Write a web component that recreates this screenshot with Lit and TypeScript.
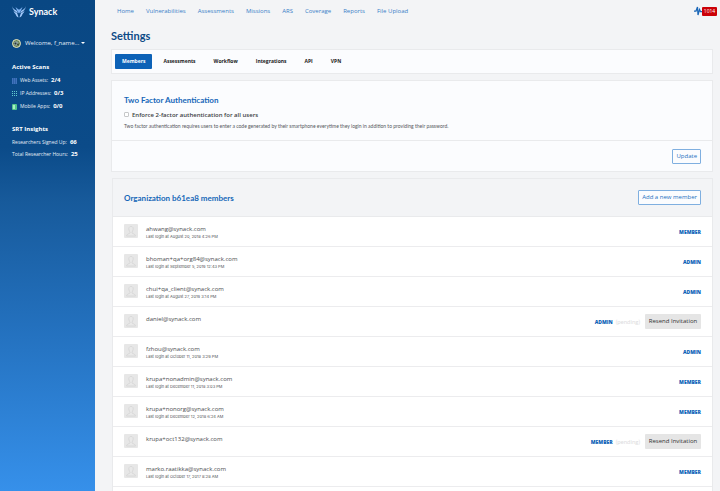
import { LitElement, html, css } from "lit";
import { customElement, property } from "lit/decorators.js";

interface Member {
  email: string;
  login?: string;
  role: string;
  pending?: boolean;
}

const NAV = ["Home", "Vulnerabilities", "Assessments", "Missions", "ARS", "Coverage", "Reports", "File Upload"];
const TABS = ["Members", "Assessments", "Workflow", "Integrations", "API", "VPN"];
const MEMBERS: Member[] = [
  { email: "ahwang@synack.com", login: "August 20, 2018 4:26 PM", role: "MEMBER" },
  { email: "bhoman+qa+org84@synack.com", login: "September 5, 2019 12:43 PM", role: "ADMIN" },
  { email: "chui+qa_client@synack.com", login: "August 27, 2019 3:14 PM", role: "ADMIN" },
  { email: "daniel@synack.com", role: "ADMIN", pending: true },
  { email: "fzhou@synack.com", login: "October 11, 2018 3:29 PM", role: "ADMIN" },
  { email: "krupa+nonadmin@synack.com", login: "December 11, 2018 3:03 PM", role: "MEMBER" },
  { email: "krupa+nonorg@synack.com", login: "December 12, 2018 6:24 AM", role: "MEMBER" },
  { email: "krupa+oct132@synack.com", role: "MEMBER", pending: true },
  { email: "marko.raatikka@synack.com", login: "October 17, 2017 8:28 AM", role: "MEMBER" },
];

@customElement("side-bar")
export class SideBar extends LitElement {
  static styles = css`
    :host {
      display: block;
      box-sizing: border-box;
      padding: 5px 0 0 12px;
      color: #e4edf6;
      background: linear-gradient(#094783 0%, #0b4b89 30%, #175a9b 41%, #2370bd 66%, #3690ea 100%);
      font-size: 5px;
      line-height: 13px;
    }
    .logo { display: flex; align-items: center; gap: 3px; height: 14px; color: #fff; font: 700 9px/14px Lato, sans-serif; text-decoration: none; }
    .user {
      display: flex; align-items: center; gap: 4px; margin: 17px 0 0; padding: 0; height: 14px;
      border: 0; background: none; color: #e4edf6; font: 6px/14px "Open Sans", sans-serif; white-space: nowrap;
    }
    .caret { width: 0; height: 0; border: 2px solid transparent; border-top-color: #fff; border-bottom: 0; margin-left: -2px; }
    h2 { margin: 10px 0 0; font-size: 6px; line-height: 13px; color: #fff; font-weight: 700; }
    .scans { margin-top: 11px; }
    ul { margin: 0; padding: 0; list-style: none; }
    li { display: flex; align-items: center; gap: 3px; height: 13px; white-space: nowrap; }
    b { color: #fff; font-size: 6px; }
    .stats { line-height: 12px; }
    .stats li { height: 12px; }
  `;
  render() {
    return html`
      <a class="logo" href="#">
        <svg width="14" height="12" viewBox="0 0 28 24" fill="#a3c9fb">
          <path d="M0 0c1 5 5 7 9 9l3 5C6 12 1 7 0 0zM3 9c2 3 5 4 7 5l2 5C7 17 4 14 3 9zM7 16c2 2 3 2 5 3l1 4c-3-1-5-3-6-7z" />
          <path d="M28 0c-1 5-5 7-9 9l-3 5c6-2 11-7 12-14zM25 9c-2 3-5 4-7 5l-2 5c5-2 8-5 9-10zM21 16c-2 2-3 2-5 3l-1 4c3-1 5-3 6-7z" />
          <path d="M7 2l6 5h2l6-5-4 9-3 4-3-4z" fill="#7fb2f3" />
        </svg>
        Synack
      </a>
      <button class="user">
        <svg width="9" height="9" viewBox="0 0 18 18">
          <circle cx="9" cy="9" r="8" fill="#6d8652" stroke="#e6e4c6" stroke-width="2" />
          <path d="M4 7q5-5 9 0v5q-4 3-9 0z" fill="#8fa3a0" />
          <circle cx="7" cy="9" r="2" fill="#26313a" /><circle cx="12" cy="11" r="2" fill="#3d4a2c" />
        </svg>
        Welcome, f_name... <span class="caret"></span>
      </button>
      <h2 class="scans">Active Scans</h2>
      <ul>
        <li>
          <svg width="5" height="6" viewBox="0 0 5 6"><path d="M0 0h5v6H0z" fill="#2c60a8" /><path d="M0 1h5M0 3h5M0 5h5" stroke="#5585cf" stroke-width="1" stroke-dasharray="1 1" /></svg>
          Web Assets: <b>2/4</b>
        </li>
        <li>
          <svg width="5" height="6" viewBox="0 0 5 6"><path d="M0 .5h5M0 2.500h5M0 4.500h5" stroke="#63cdd0" stroke-width="1" stroke-dasharray="1 1" /></svg>
          IP Addresses: <b>0/3</b>
        </li>
        <li>
          <svg width="5" height="6" viewBox="0 0 5 6"><rect width="5" height="6" rx="1" fill="#54c58d" /><path d="M1 1h2v4H1z" fill="#a9efc4" /></svg>
          Mobile Apps: <b>0/0</b>
        </li>
      </ul>
      <h2>SRT Insights</h2>
      <ul class="stats">
        <li>Researchers Signed Up: <b>66</b></li>
        <li>Total Researcher Hours: <b>25</b></li>
      </ul>
    `;
  }
}

@customElement("member-row")
export class MemberRow extends LitElement {
  @property({ attribute: false }) member!: Member;
  static styles = css`
    :host {
      display: flex; box-sizing: border-box; height: 30px; padding: 7px 11px 0;
      border-bottom: 1px solid #ececee; background: #fff;
    }
    .avatar { flex: none; width: 14px; height: 14px; margin-right: 8px; }
    .who { flex: 1; font-size: 6px; line-height: 10px; color: #4b4d50; }
    .login { font: 4px/5px Inter, sans-serif; color: #505255; }
    .side { display: flex; align-items: center; height: 15px; gap: 3px; font-size: 5px; }
    .role { color: #0d62b7; font-weight: 800; }
    .pending { color: #dcdcde; font: 6px/15px Lato, sans-serif; }
    button {
      height: 15px; margin: 0 0 0 2px; padding: 0; width: 56px; border: 0; border-radius: 1px;
      background: #e5e5e5; color: #333; font: 6px/15px "Open Sans", sans-serif; white-space: nowrap;
    }
  `;
  render() {
    const m = this.member;
    return html`
      <svg class="avatar" viewBox="0 0 28 28">
        <rect width="28" height="28" rx="2" fill="#e7e7e7" />
        <path d="M14 5c-4 0-5 3-4 7 .4 2 1.500 3 2 4v2c-1 2-6 1-7 6h18c-1-5-6-4-7-6v-2c.5-1 1.600-2 2-4 1-4 0-7-4-7z" fill="#e9e9e9" stroke="#d3d3d3" stroke-width="1.500" />
      </svg>
      <div class="who">
        <div>${m.email}</div>
        ${m.login ? html`<div class="login">Last login at ${m.login}</div>` : ""}
      </div>
      <div class="side">
        <span class="role">${m.role}</span>
        ${m.pending ? html`<span class="pending">(pending)</span><button>Resend Invitation</button>` : ""}
      </div>
    `;
  }
}

@customElement("app-root")
export class AppRoot extends LitElement {
  static styles = css`
    :host {
      display: grid; grid-template-columns: 95px minmax(0, 1fr); min-height: 100vh;
      background: #f3f4f6; font-family: "Open Sans", sans-serif; font-size: 6px; color: #333;
    }
    main { display: flex; flex-direction: column; padding: 0 7px 0 16px; }
    header { display: flex; align-items: center; height: 22px; }
    nav { display: flex; flex: 1; gap: 12px; padding-left: 6px; }
    nav a { color: #3a7fc8; text-decoration: none; white-space: nowrap; }
    .alerts { display: flex; align-items: center; margin-right: -4px; }
    .count { width: 15px; height: 9px; background: #cb0007; border-radius: 1px; color: #fff; font-size: 5px; line-height: 9px; text-align: center; }
    h1 { margin: 7px 0 0; font: 700 11px/14px Lato, sans-serif; color: #0d4a86; }
    .card { background: #fbfcfe; border: 1px solid #e9eaec; }
    .tabs { display: flex; align-items: center; box-sizing: border-box; height: 25px; margin-top: 6px; padding-left: 3px; }
    .tabs button {
      height: 15px; padding: 0 7px; margin-right: 4px; border: 0; border-radius: 1px; background: none;
      color: #222; font: 700 5px/15px "Open Sans", sans-serif;
    }
    .tabs .active { background: #0d62b7; color: #fff; }
    .auth { margin-top: 6px; }
    .body { box-sizing: border-box; height: 60px; padding: 12px 12px 0; border-bottom: 1px solid #e9eaec; }
    h2 { margin: 0; font: 700 8px/14px Lato, sans-serif; color: #1567b8; }
    label { display: flex; align-items: center; gap: 3px; height: 15px; font-weight: 600; color: #3c3f43; }
    input { appearance: none; width: 5px; height: 5px; margin: 0; border: 1px solid #c5c7c9; border-radius: 1px; background: #fff; }
    p { margin: 0; font: 5px/8px Lato, sans-serif; color: #55585c; white-space: nowrap; }
    .foot { display: flex; align-items: center; justify-content: flex-end; height: 30px; padding-right: 11px; }
    .outline {
      height: 15px; padding: 0 3px; border: 1px solid #7fafe0; border-radius: 1px; background: #fbfcfe;
      color: #2470be; font: 6px/13px "Open Sans", sans-serif; white-space: nowrap;
    }
    .members { display: flex; flex-direction: column; flex: 1; margin: 6px 0 0 1px; border-bottom: 0; background: #fff; }
    .title { display: flex; align-items: center; justify-content: space-between; box-sizing: border-box; height: 38px; padding: 0 11px; background: #f3f4f6; border-bottom: 1px solid #e9eaec; }
  `;
  render() {
    return html`
      <side-bar></side-bar>
      <main>
        <header>
          <nav>${NAV.map((n) => html`<a href="#">${n}</a>`)}</nav>
          <div class="alerts">
            <svg width="8" height="10" viewBox="0 0 16 20"><path d="M0 10h4l3-8 1 16 3-11 2 4h3" fill="none" stroke="#1b67b8" stroke-width="2.500" /></svg>
            <span class="count">1014</span>
          </div>
        </header>
        <h1>Settings</h1>
        <div class="card tabs">${TABS.map((t, i) => html`<button class=${i ? "" : "active"}>${t}</button>`)}</div>
        <section class="card auth">
          <div class="body">
            <h2>Two Factor Authentication</h2>
            <label><input type="checkbox" />Enforce 2-factor authentication for all users</label>
            <p>Two factor authentication requires users to enter a code generated by their smartphone everytime they login in addition to providing their password.</p>
          </div>
          <div class="foot"><button class="outline">Update</button></div>
        </section>
        <section class="card members">
          <div class="title">
            <h2>Organization b61ea8 members</h2>
            <button class="outline">Add a new member</button>
          </div>
          ${MEMBERS.map((m) => html`<member-row .member=${m}></member-row>`)}
        </section>
      </main>
    `;
  }
}
